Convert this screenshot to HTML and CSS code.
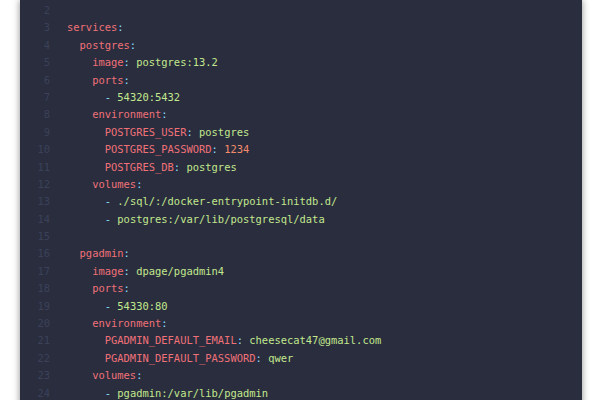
FILE: index.html
```html
<!DOCTYPE html>
<html>
<head>
<meta charset="utf-8">
<link rel="stylesheet" href="styles.css">
</head>
<body>
<div class="page">
  <div class="code">
    <div class="ln"><span class="no">2</span><span class="src"></span></div>
    <div class="ln"><span class="no">3</span><span class="src"><span class="k">services</span><span class="p">:</span></span></div>
    <div class="ln"><span class="no">4</span><span class="src">  <span class="k">postgres</span><span class="p">:</span></span></div>
    <div class="ln"><span class="no">5</span><span class="src">    <span class="k">image</span><span class="p">:</span> <span class="v">postgres:13.2</span></span></div>
    <div class="ln"><span class="no">6</span><span class="src">    <span class="k">ports</span><span class="p">:</span></span></div>
    <div class="ln"><span class="no">7</span><span class="src">      <span class="p">-</span> <span class="v">54320:5432</span></span></div>
    <div class="ln"><span class="no">8</span><span class="src">    <span class="k">environment</span><span class="p">:</span></span></div>
    <div class="ln"><span class="no">9</span><span class="src">      <span class="k">POSTGRES_USER</span><span class="p">:</span> <span class="v">postgres</span></span></div>
    <div class="ln"><span class="no">10</span><span class="src">      <span class="k">POSTGRES_PASSWORD</span><span class="p">:</span> <span class="n">1234</span></span></div>
    <div class="ln"><span class="no">11</span><span class="src">      <span class="k">POSTGRES_DB</span><span class="p">:</span> <span class="v">postgres</span></span></div>
    <div class="ln"><span class="no">12</span><span class="src">    <span class="k">volumes</span><span class="p">:</span></span></div>
    <div class="ln"><span class="no">13</span><span class="src">      <span class="p">-</span> <span class="v">./sql/:/docker-entrypoint-initdb.d/</span></span></div>
    <div class="ln"><span class="no">14</span><span class="src">      <span class="p">-</span> <span class="v">postgres:/var/lib/postgresql/data</span></span></div>
    <div class="ln"><span class="no">15</span><span class="src"></span></div>
    <div class="ln"><span class="no">16</span><span class="src">  <span class="k">pgadmin</span><span class="p">:</span></span></div>
    <div class="ln"><span class="no">17</span><span class="src">    <span class="k">image</span><span class="p">:</span> <span class="v">dpage/pgadmin4</span></span></div>
    <div class="ln"><span class="no">18</span><span class="src">    <span class="k">ports</span><span class="p">:</span></span></div>
    <div class="ln"><span class="no">19</span><span class="src">      <span class="p">-</span> <span class="v">54330:80</span></span></div>
    <div class="ln"><span class="no">20</span><span class="src">    <span class="k">environment</span><span class="p">:</span></span></div>
    <div class="ln"><span class="no">21</span><span class="src">      <span class="k">PGADMIN_DEFAULT_EMAIL</span><span class="p">:</span> <span class="v">cheesecat47@gmail.com</span></span></div>
    <div class="ln"><span class="no">22</span><span class="src">      <span class="k">PGADMIN_DEFAULT_PASSWORD</span><span class="p">:</span> <span class="v">qwer</span></span></div>
    <div class="ln"><span class="no">23</span><span class="src">    <span class="k">volumes</span><span class="p">:</span></span></div>
    <div class="ln"><span class="no">24</span><span class="src">      <span class="p">-</span> <span class="v">pgadmin:/var/lib/pgadmin</span></span></div>
  </div>
</div>
</body>
</html>
```
FILE: styles.css
```css
html, body {
  margin: 0;
  padding: 0;
  background: #ffffff;
  height: 400px;
  overflow: hidden;
}
.page {
  padding: 0 18px 0 20px;
}
.code {
  background: #292d3e;
  box-shadow: 0 0 7px rgba(0, 0, 0, 0.45);
  font-family: "DejaVu Sans Mono", "Liberation Mono", monospace;
  font-size: 10.45px;
  line-height: 17.4px;
  padding-top: 2px;
  padding-bottom: 20px;
}
.ln {
  display: flex;
  height: 17.4px;
}
.no {
  width: 30px;
  flex: none;
  text-align: right;
  color: #3c4159;
}
.src {
  padding-left: 17px;
  white-space: pre;
  color: #a6accd;
}
.k { color: #f07178; }
.p { color: #89ddff; }
.v { color: #c3e88d; }
.n { color: #f78c6c; }
```
